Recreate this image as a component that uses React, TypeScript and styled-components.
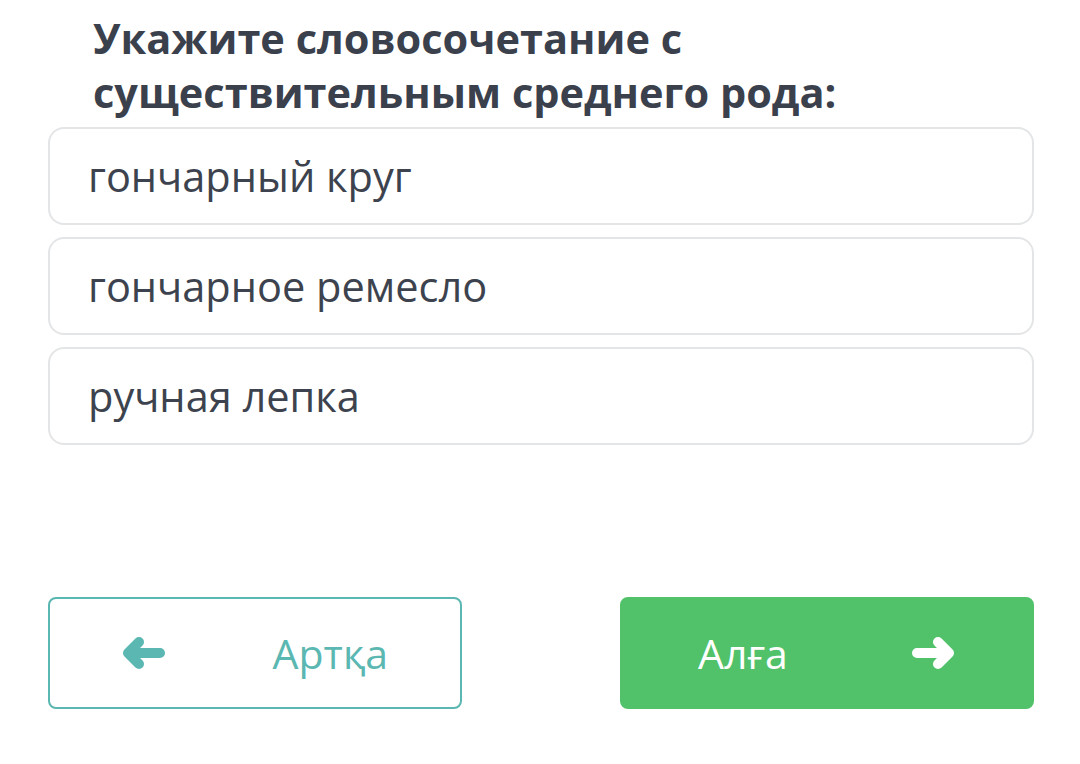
import styled, { createGlobalStyle } from 'styled-components';

const GlobalStyle = createGlobalStyle`
  html, body {
    margin: 0;
    padding: 0;
    background: #ffffff;
  }
  body {
    font-family: 'Open Sans', 'Noto Sans', sans-serif;
  }
`;

const options = ['гончарный круг', 'гончарное ремесло', 'ручная лепка'];

const ArrowIcon = ({ dir, color }: { dir: 'left' | 'right'; color: string }) => (
  <svg
    width="42"
    height="34"
    viewBox="0 0 42 34"
    style={dir === 'right' ? { transform: 'scaleX(-1)' } : undefined}
  >
    <path
      d="M37 17H5M16 6L5 17L16 28"
      fill="none"
      stroke={color}
      strokeWidth="10"
      strokeLinecap="round"
      strokeLinejoin="round"
    />
  </svg>
);

const App = () => {
  return (
    <>
      <GlobalStyle />
      <Page>
        <Question>
          Укажите словосочетание с
          <br />
          существительным среднего рода:
        </Question>
        <OptionList>
          {options.map((text) => (
            <Option key={text}>{text}</Option>
          ))}
        </OptionList>
        <Actions>
          <NavButton variant="back">
            <ArrowIcon dir="left" color="#5bb7b1" />
            <span>Артқа</span>
          </NavButton>
          <NavButton variant="next">
            <span>Алға</span>
            <ArrowIcon dir="right" color="#ffffff" />
          </NavButton>
        </Actions>
      </Page>
    </>
  );
};

export default App;

const Page = styled.div`
  display: flex;
  flex-direction: column;
  width: 986px;
  margin-left: 48px;
  padding-top: 11px;
`;

const Question = styled.h1`
  margin: 0 0 8px;
  padding-left: 45px;
  font-size: 41.5px;
  line-height: 54px;
  font-weight: 700;
  color: #3b414c;
`;

const OptionList = styled.div`
  display: flex;
  flex-direction: column;
  gap: 12px;
`;

const Option = styled.div`
  display: flex;
  align-items: center;
  height: 98px;
  box-sizing: border-box;
  padding-left: 38px;
  border: 2px solid #e3e5e7;
  border-radius: 16px;
  background: #ffffff;
  font-size: 41.5px;
  color: #3d434e;
`;

const Actions = styled.div`
  display: flex;
  justify-content: space-between;
  margin-top: 152px;
`;

const NavButton = styled.div<{ variant: 'back' | 'next' }>`
  display: flex;
  align-items: center;
  justify-content: space-between;
  box-sizing: border-box;
  width: 414px;
  height: 112px;
  padding: ${(p) => (p.variant === 'back' ? '0 72px 0 73px' : '0 78px 0 76px')};
  border-radius: 8px;
  font-size: 41px;
  border: 2px solid ${(p) => (p.variant === 'back' ? '#5bb7b1' : '#51c26a')};
  background: ${(p) => (p.variant === 'back' ? '#ffffff' : '#51c26a')};
  color: ${(p) => (p.variant === 'back' ? '#5bb7b1' : '#ffffff')};
`;
